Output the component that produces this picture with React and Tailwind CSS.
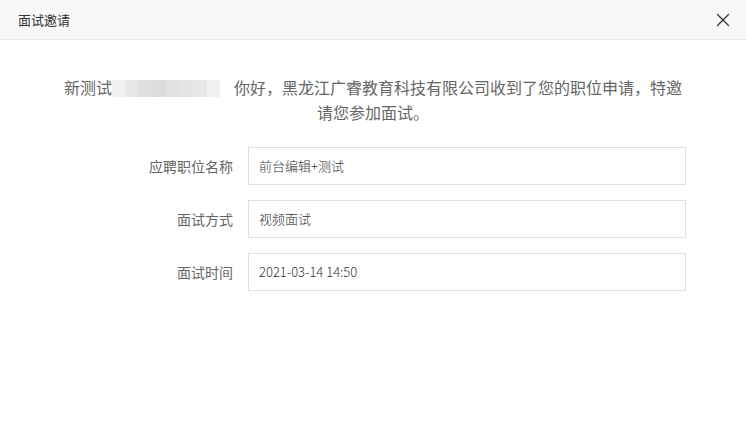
import { X } from 'lucide-react'

const campos = [
  { label: '应聘职位名称', valor: '前台编辑+测试' },
  { label: '面试方式', valor: '视频面试' },
  { label: '面试时间', valor: '2021-03-14 14:50' }
]

// bloques grises del nombre borroso
const mosaico = ['bg-[#f0f0f0]', 'bg-[#e6e6e6]', 'bg-[#e0e0e0]', 'bg-[#dcdcdc]', 'bg-[#e2e2e2]', 'bg-[#e4e4e4]', 'bg-[#e8e8e8]', 'bg-[#f1f1f1]']

export default function App() {
  return (
    <div
      className="w-[746px] h-[431px] bg-white overflow-hidden"
      style={{ fontFamily: '"Noto Sans CJK SC", "Noto Sans", sans-serif' }}
    >
      {/* Cabecera */}
      <div className="h-[40px] bg-[#f8f8f8] border-b border-[#ececec] flex items-center justify-between pl-[18px] pr-[12px]">
        <span className="text-[13px] text-[#333]">面试邀请</span>
        <X className="w-[22px] h-[22px] text-[#333]" strokeWidth={1.4} />
      </div>

      {/* Mensaje */}
      <p className="mt-[35px] px-[60px] text-center text-[16px] leading-[25px] text-[#666]">
        新测试
        <span className="inline-flex align-[-3px] w-[108px] h-[17px] mr-[14px] blur-[0.6px]">
          {mosaico.map((c, i) => (
            <span key={i} className={`flex-1 h-full ${c}`} />
          ))}
        </span>
        你好，黑龙江广睿教育科技有限公司收到了您的职位申请，特邀请您参加面试。
      </p>

      {/* Formulario */}
      <div className="mt-[22px] pl-[60px] pr-[60px] flex flex-col gap-[15px]">
        {campos.map(campo => (
          <div key={campo.label} className="flex items-center">
            <div className="w-[188px] pr-[15px] text-right text-[14px] text-[#666]">{campo.label}</div>
            <div className="flex-1 h-[38px] border border-[#dcdfe6] flex items-center pl-[10px] text-[13px] text-[#333] font-light">
              {campo.valor}
            </div>
          </div>
        ))}
      </div>
    </div>
  )
}
